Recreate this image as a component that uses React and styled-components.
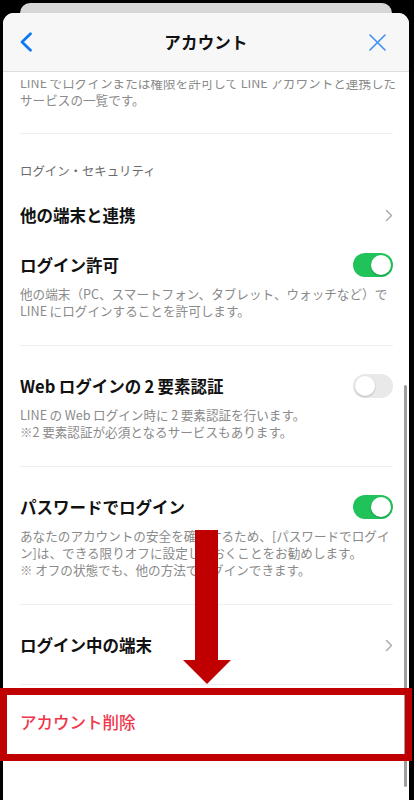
import styled, { createGlobalStyle } from "styled-components";

const GlobalStyle = createGlobalStyle`
  html, body {
    margin: 0;
    padding: 0;
    background: #000;
  }
  body {
    font-family: "Noto Sans CJK JP", "Noto Sans", sans-serif;
    -webkit-font-smoothing: antialiased;
  }
`;

const Screen = styled.div`
  position: relative;
  height: 800px;
  overflow: hidden;
  background: #000;
  display: flex;
  flex-direction: column;
`;

const BackCard = styled.div`
  height: 10px;
  flex-shrink: 0;
  margin: 3px 22px 0 20px;
  background: #d7d7d7;
  border-radius: 10px 10px 0 0;
`;

const Sheet = styled.div`
  position: relative;
  flex: 1;
  margin: 0 5px 0 3px;
  background: #fff;
  border-radius: 11px 11px 0 0;
  overflow: hidden;
  display: flex;
  flex-direction: column;
`;

const Header = styled.header`
  box-sizing: border-box;
  height: 59px;
  flex-shrink: 0;
  display: grid;
  grid-template-columns: 60px 1fr 60px;
  align-items: center;
  background: #f7f7f7;
  border-bottom: 1px solid #dddddd;
`;

const HeaderTitle = styled.h1`
  margin: 0;
  text-align: center;
  font-size: 16.5px;
  font-weight: 700;
  color: #111;
  letter-spacing: 0.2px;
`;

const IconButton = styled.button`
  border: none;
  background: none;
  padding: 0;
  height: 100%;
  display: flex;
  align-items: center;
  justify-content: ${(p) => (p.$end ? "flex-end" : "flex-start")};
  padding-left: ${(p) => (p.$end ? 0 : 16)}px;
  padding-right: ${(p) => (p.$end ? 23 : 0)}px;
`;

const Viewport = styled.div`
  flex: 1;
  margin-top: 8px;
  overflow: hidden;
  padding: 0 16px 0 17px;
`;

const Group = styled.section`
  border-bottom: ${(p) => (p.$last ? "none" : "1px solid #efefef")};
  padding: ${(p) => p.$pt ?? 26}px 0 ${(p) => p.$pb ?? 26}px;
`;

const SectionLabel = styled.div`
  font-size: 12.4px;
  line-height: 16px;
  color: #6a6a6a;
  margin-bottom: 22px;
`;

const Row = styled.div`
  display: flex;
  align-items: center;
  justify-content: space-between;
  height: 28px;
  margin-bottom: ${(p) => p.$mb ?? 0}px;
`;

const Title = styled.span`
  font-size: 16.5px;
  font-weight: ${(p) => (p.$danger ? 500 : 700)};
  color: ${(p) => (p.$danger ? "#f1364b" : "#111")};
  white-space: nowrap;
`;

const Desc = styled.p`
  margin: ${(p) => p.$mt ?? 6}px 0 0;
  font-size: 12.6px;
  line-height: 17px;
  color: #8a8a8a;
  white-space: nowrap;
`;

const Toggle = styled.span`
  position: relative;
  flex-shrink: 0;
  width: 40px;
  height: 24px;
  border-radius: 12px;
  background: ${(p) => (p.$on ? "#20c35a" : "#e9e9ea")};

  &::after {
    content: "";
    position: absolute;
    top: 2px;
    left: ${(p) => (p.$on ? 18 : 2)}px;
    width: 20px;
    height: 20px;
    border-radius: 50%;
    background: #fff;
    box-shadow: 0 1px 2px rgba(0, 0, 0, 0.22);
  }
`;

const ScrollIndicator = styled.div`
  position: absolute;
  left: 404px;
  top: 385px;
  width: 3px;
  height: 402px;
  border-radius: 2px;
  background: #9e9e9e;
`;

const Highlight = styled.div`
  position: absolute;
  left: 0;
  top: 688px;
  width: 412px;
  height: 73px;
  box-sizing: border-box;
  border: 7px solid #c00000;
`;

const Arrow = styled.div`
  position: absolute;
  left: 182px;
  top: 530px;
  width: 49px;
  height: 154px;
  display: flex;
  flex-direction: column;
  align-items: center;
`;

const ArrowShaft = styled.div`
  width: 23px;
  flex: 1;
  background: #c00000;
`;

const ArrowHead = styled.div`
  width: 0;
  height: 0;
  border-left: 24.5px solid transparent;
  border-right: 24.5px solid transparent;
  border-top: 24px solid #c00000;
`;

const Chevron = () => (
  <svg width="8" height="13" viewBox="0 0 8 13" fill="none">
    <path d="M1.5 1.5 L6.5 6.5 L1.5 11.5" stroke="#adadad" strokeWidth="1.5" strokeLinecap="round" strokeLinejoin="round" />
  </svg>
);

const BackIcon = () => (
  <svg width="14" height="20" viewBox="0 0 14 20" fill="none">
    <path d="M11.5 1.8 L3 10 L11.5 18.2" stroke="#0b78f2" strokeWidth="2.7" strokeLinecap="round" strokeLinejoin="round" />
  </svg>
);

const CloseIcon = () => (
  <svg width="17" height="17" viewBox="0 0 17 17" fill="none">
    <path d="M1 1 L16 16 M16 1 L1 16" stroke="#3f8ff5" strokeWidth="1.6" strokeLinecap="round" />
  </svg>
);

const t = "\u2009";

export default function App() {
  return (
    <>
      <GlobalStyle />
      <Screen>
        <BackCard />
        <Sheet>
          <Header>
            <IconButton aria-label="戻る">
              <BackIcon />
            </IconButton>
            <HeaderTitle>アカウント</HeaderTitle>
            <IconButton $end aria-label="閉じる">
              <CloseIcon />
            </IconButton>
          </Header>
          <Viewport>
            <Group $pt={0} $pb={25}>
              <Desc $mt={-6}>
                LINE{t}でログインまたは権限を許可して{t}LINE{t}アカウントと連携した
                <br />
                サービスの一覧です。
              </Desc>
            </Group>

            <Group $pt={29}>
              <SectionLabel>ログイン・セキュリティ</SectionLabel>
              <Row $mb={22}>
                <Title>他の端末と連携</Title>
                <Chevron />
              </Row>
              <Row>
                <Title>ログイン許可</Title>
                <Toggle $on />
              </Row>
              <Desc>
                他の端末（PC、スマートフォン、タブレット、ウォッチなど）で
                <br />
                LINE{t}にログインすることを許可します。
              </Desc>
            </Group>

            <Group>
              <Row>
                <Title>Web{t}ログインの{t}2{t}要素認証</Title>
                <Toggle />
              </Row>
              <Desc>
                LINE{t}の{t}Web{t}ログイン時に{t}2{t}要素認証を行います。
                <br />
                ※2{t}要素認証が必須となるサービスもあります。
              </Desc>
            </Group>

            <Group>
              <Row>
                <Title>パスワードでログイン</Title>
                <Toggle $on />
              </Row>
              <Desc>
                あなたのアカウントの安全を確保するため、[パスワードでログイ
                <br />
                ン]は、できる限りオフに設定しておくことをお勧めします。
                <br />
                ※{t}オフの状態でも、他の方法でログインできます。
              </Desc>
            </Group>

            <Group $pb={25}>
              <Row>
                <Title>ログイン中の端末</Title>
                <Chevron />
              </Row>
            </Group>

            <Group $last $pt={23} $pb={60}>
              <Row>
                <Title $danger>アカウント削除</Title>
              </Row>
            </Group>
          </Viewport>
        </Sheet>
        <ScrollIndicator />
        <Arrow>
          <ArrowShaft />
          <ArrowHead />
        </Arrow>
        <Highlight />
      </Screen>
    </>
  );
}
